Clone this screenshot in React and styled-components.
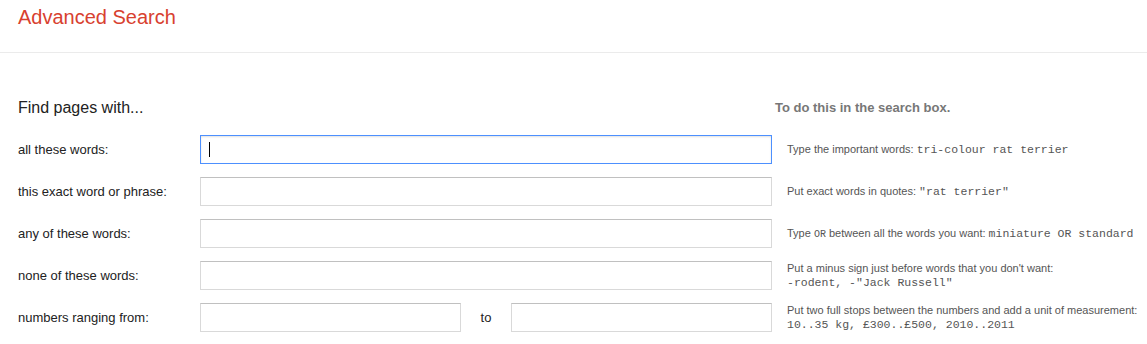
import React from "react";
import styled, { createGlobalStyle } from "styled-components";

const Global = createGlobalStyle`
  html, body { margin: 0; padding: 0; background: #fff; }
  body { font-family: Arial, "Liberation Sans", sans-serif; color: #222; }
`;

const Header = styled.header`
  height: 52px;
  border-bottom: 1px solid #ebebeb;
  box-sizing: content-box;
  display: flex;
  align-items: flex-start;
  padding-left: 18px;
`;

const Title = styled.h1`
  margin: 5px 0 0;
  font-size: 20px;
  font-weight: normal;
  line-height: 24px;
  color: #d8412f;
`;

const Form = styled.div`
  display: grid;
  grid-template-columns: 167px 572px 1fr;
  column-gap: 15px;
  row-gap: 13px;
  padding: 45px 0 0 18px;
  align-items: center;
`;

const SectionTitle = styled.div`
  grid-column: 1 / span 2;
  font-size: 16px;
  line-height: 20px;
  color: #222;
  margin-bottom: 4px;
`;

const SideTitle = styled.div`
  font-size: 13px;
  font-weight: bold;
  color: #777;
  line-height: 20px;
  margin-left: -12px;
  margin-bottom: 4px;
  white-space: nowrap;
`;

const Label = styled.label`
  font-size: 13px;
  color: #222;
  line-height: 29px;
  white-space: nowrap;
`;

const Field = styled.div`
  position: relative;
  display: flex;
  align-items: center;
`;

const Input = styled.input`
  box-sizing: border-box;
  width: ${(p) => p.$width || "100%"};
  height: 29px;
  border: 1px solid ${(p) => (p.$focused ? "#4d90fe" : "#d9d9d9")};
  border-top-color: ${(p) => (p.$focused ? "#4d90fe" : "#c0c0c0")};
  box-shadow: ${(p) => (p.$focused ? "inset 0 1px 2px rgba(0,0,0,0.12)" : "none")};
  outline: none;
  padding: 0 8px;
  font-size: 13px;
  font-family: Arial, "Liberation Sans", sans-serif;
  background: #fff;
`;

const Caret = styled.span`
  position: absolute;
  left: 9px;
  top: 7px;
  width: 1px;
  height: 15px;
  background: #000;
`;

const To = styled.span`
  flex: 1;
  text-align: center;
  font-size: 13px;
  color: #222;
`;

const Hint = styled.div`
  font-size: 11px;
  color: #555;
  line-height: 14px;
  white-space: nowrap;
`;

const Code = styled.span`
  font-family: "Courier New", "Liberation Mono", monospace;
  font-size: ${(p) => (p.$small ? "10px" : "11.5px")};
  color: #555;
`;

const rows = [
  {
    label: "all these words:",
    focused: true,
    hint: (
      <>
        Type the important words: <Code>tri-colour rat terrier</Code>
      </>
    ),
  },
  {
    label: "this exact word or phrase:",
    hint: (
      <>
        Put exact words in quotes: <Code>"rat terrier"</Code>
      </>
    ),
  },
  {
    label: "any of these words:",
    hint: (
      <>
        Type <Code $small>OR</Code> between all the words you want:{" "}
        <Code>miniature OR standard</Code>
      </>
    ),
  },
  {
    label: "none of these words:",
    hint: (
      <>
        Put a minus sign just before words that you don't want:
        <br />
        <Code>-rodent, -"Jack Russell"</Code>
      </>
    ),
  },
];

export default function App() {
  return (
    <>
      <Global />
      <Header>
        <Title>Advanced Search</Title>
      </Header>
      <Form>
        <SectionTitle>Find pages with...</SectionTitle>
        <SideTitle>To do this in the search box.</SideTitle>
        {rows.map((r) => (
          <React.Fragment key={r.label}>
            <Label>{r.label}</Label>
            <Field>
              <Input $focused={r.focused} readOnly />
              {r.focused && <Caret />}
            </Field>
            <Hint>{r.hint}</Hint>
          </React.Fragment>
        ))}
        <Label>numbers ranging from:</Label>
        <Field>
          <Input $width="261px" readOnly />
          <To>to</To>
          <Input $width="261px" readOnly />
        </Field>
        <Hint>
          Put two full stops between the numbers and add a unit of measurement:
          <br />
          <Code>10..35 kg, £300..£500, 2010..2011</Code>
        </Hint>
      </Form>
    </>
  );
}
